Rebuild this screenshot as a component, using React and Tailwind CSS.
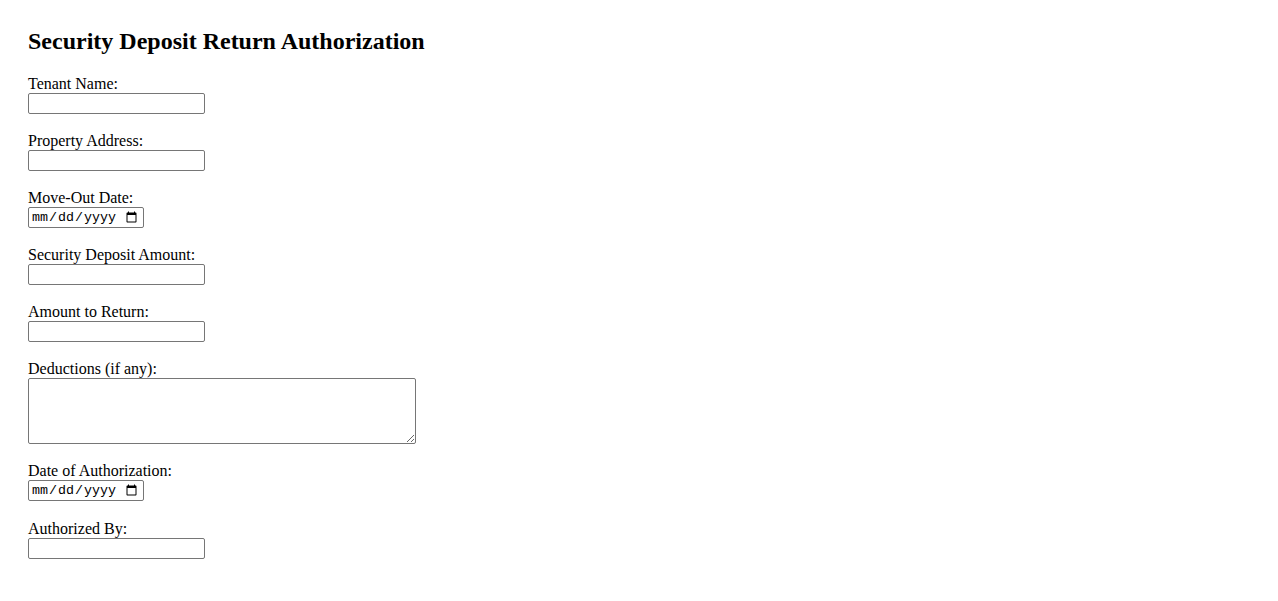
import React from "react";

const fields = [
  { label: "Tenant Name:", type: "text" },
  { label: "Property Address:", type: "text" },
  { label: "Move-Out Date:", type: "date" },
  { label: "Security Deposit Amount:", type: "text" },
  { label: "Amount to Return:", type: "text" },
  { label: "Deductions (if any):", type: "textarea" },
  { label: "Date of Authorization:", type: "date" },
  { label: "Authorized By:", type: "text" },
];

const App = () => {
  return (
    <div className="min-h-screen bg-white pt-[27px] pl-[28px] text-black font-['Liberation_Serif',serif]">
      <h2 className="text-[24px] leading-[28px] font-bold mb-[20px]">
        Security Deposit Return Authorization
      </h2>

      <form>
        {fields.map((f, i) => (
          <div className={i === 6 ? "mb-[19px]" : "mb-[18px]"} key={f.label}>
            <label className="block text-[16px] leading-[18px]">{f.label}</label>
            {f.type === "textarea" ? (
              <textarea className="block w-[388px] h-[66px] border border-[#767676] rounded-[2px] bg-white text-[13.33px] font-mono" />
            ) : f.type === "date" ? (
              <input
                type="date"
                className="block w-[116px] h-[21px] border border-[#767676] rounded-[2px] bg-white pl-[2px] pr-[3px] text-[13.33px] font-['Liberation_Mono',monospace]"
              />
            ) : (
              <input
                type="text"
                className="block w-[177px] h-[21px] border border-[#767676] rounded-[2px] bg-white px-[2px] text-[13.33px] font-['Liberation_Sans',sans-serif]"
              />
            )}
          </div>
        ))}
      </form>
    </div>
  );
};

export default App;
